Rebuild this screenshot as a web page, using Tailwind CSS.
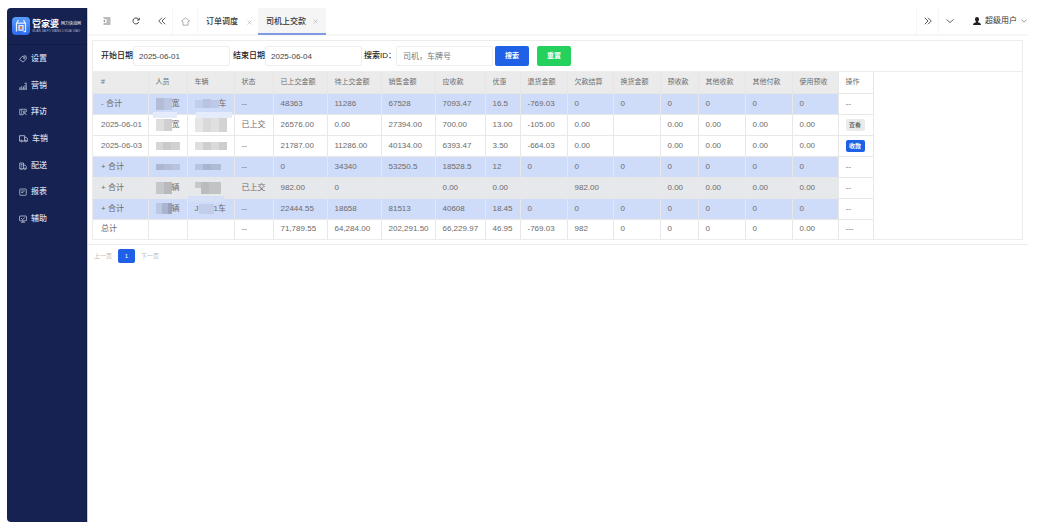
<!DOCTYPE html>
<html lang="zh-CN">
<head>
    <meta charset="UTF-8">
    <meta name="viewport" content="width=device-width, initial-scale=1.0">
    <title>司机上交款</title>
    <script src="https://cdn.jsdelivr.net/npm/@tailwindcss/browser@4"></script>
</head>
<body class="bg-white text-[#6b6b6b] text-[8px] leading-3 font-['Liberation_Sans','Noto_Sans_CJK_SC',sans-serif]">
    <div class="flex min-h-screen pt-2 pb-[6px] pl-[7px] pr-[31px]">
        <!-- 左侧菜单 -->
        <aside class="w-20 shrink-0 bg-[#152252] rounded-l border-r border-[#0f1a45] text-[#d3d8e8]">
            <div class="flex items-center gap-[2px] h-[37px] pl-[5px] border-b border-[#111c48]">
                <svg class="size-[18px] shrink-0" viewBox="0 0 36 36" fill="none">
                    <defs><linearGradient id="logo" x1="0" y1="0" x2="0" y2="1"><stop stop-color="#5b9dfb"/><stop offset="1" stop-color="#2a69ee"/></linearGradient></defs>
                    <rect width="36" height="36" rx="8" fill="url(#logo)"/>
                    <path d="M13 6l-3 5M23 6l3 5M8 12h20M9 12v17M27 12v17h-4M14 17h8v9h-8zM14 21h8" stroke="#e6efff" stroke-width="2.5"/>
                    <circle cx="18" cy="21" r="2.500" fill="#e8762c"/>
                </svg>
                <div>
                    <div class="flex items-center gap-[2px] whitespace-nowrap text-white">
                        <b class="text-[9px] leading-[10px]">管家婆</b>
                        <span class="text-[4px] leading-[10px]">网力快消网</span>
                    </div>
                    <div class="text-[3px] leading-[4px] whitespace-nowrap text-[#aab4d4]">GUAN JIA PO WANG LI KUAI XIAO</div>
                </div>
            </div>
            <nav class="grid auto-rows-fr h-[187px] pt-px font-medium">
                <a href="#" class="flex items-center gap-1 pl-3">
                    <svg class="size-2" viewBox="0 0 16 16" fill="none" stroke="currentColor" stroke-width="1.4"><path d="M6 3l7.500-1.500 1.500 6L8.500 14 1 9z" stroke-linejoin="round"/><circle cx="10.500" cy="6" r="1.500"/></svg>
                    设置
                </a>
                <a href="#" class="flex items-center gap-1 pl-3">
                    <svg class="size-2" viewBox="0 0 16 16" fill="none" stroke="currentColor" stroke-width="1.4"><path d="M2 14v-4M5.500 14V8M9 14V9M12 14V6M14.500 14V2M0 14.500h16M11 3l3.500-1.500"/></svg>
                    营销
                </a>
                <a href="#" class="flex items-center gap-1 pl-3">
                    <svg class="size-2" viewBox="0 0 16 16" fill="none" stroke="currentColor" stroke-width="1.4"><path d="M8 13.500H1.500v-11h13V8M4 5.500h3M4 8h2M4 10.500h2"/><circle cx="10.500" cy="8" r="2"/><path d="M8 14c0-5 6-5 6 0"/></svg>
                    拜访
                </a>
                <a href="#" class="flex items-center gap-1 pl-3">
                    <svg class="size-[9px]" viewBox="0 0 16 16" fill="none" stroke="currentColor" stroke-width="1.4"><path d="M3 12.500H1V3h9v9.500H6M10 6h3l2.500 3v3.500H14"/><circle cx="4.500" cy="12.500" r="1.500"/><circle cx="12" cy="12.500" r="1.500"/></svg>
                    车销
                </a>
                <a href="#" class="flex items-center gap-1 pl-3">
                    <svg class="size-2" viewBox="0 0 16 16" fill="none" stroke="currentColor" stroke-width="1.4"><path d="M3 14H1.500V2H9v12H6M3.500 5H7M3.500 8H7M9 6h3l2.500 3v5H13"/><circle cx="4.500" cy="13.500" r="1.500"/><circle cx="11.500" cy="13.500" r="1.500"/></svg>
                    配送
                </a>
                <a href="#" class="flex items-center gap-1 pl-3">
                    <svg class="size-2" viewBox="0 0 16 16" fill="none" stroke="currentColor" stroke-width="1.4"><rect x="1.500" y="2" width="13" height="12.500" rx="1"/><path d="M4.500 6h7M4.500 9h4"/></svg>
                    报表
                </a>
                <a href="#" class="flex items-center gap-1 pl-3">
                    <svg class="size-2" viewBox="0 0 16 16" fill="none" stroke="currentColor" stroke-width="1.4"><rect x="1" y="2" width="14" height="9.500" rx="1"/><path d="M4 6l3 3 5-4M8 11.500V14M4 14.500h8"/></svg>
                    辅助
                </a>
            </nav>
        </aside>

        <div class="flex-1 min-w-0 border-l border-[#c9cde0]">
            <!-- 顶部标签栏 -->
            <header class="flex h-7 border-b-2 border-[#f6f6f6] text-[#333]">
                <button class="w-[38px] grid place-items-center" aria-label="收起菜单">
                    <svg class="size-2" viewBox="0 0 16 16" fill="none" stroke="#555" stroke-width="1.600"><path d="M1 2h14M7 6h8M7 10h8M1 14h14M4 5.500L1.500 8 4 10.500"/></svg>
                </button>
                <button class="w-[20px] grid place-items-center" aria-label="刷新">
                    <svg class="size-2" viewBox="0 0 16 16" fill="none" stroke="#333" stroke-width="1.800"><path d="M13.500 10A6 6 0 1 1 12.500 4L14 5.500M14.500 1.500v4.500H10"/></svg>
                </button>
                <button class="w-[27px] pl-[5px] grid place-items-center border-r border-[#f6f6f6]" aria-label="向左">
                    <svg class="size-2" viewBox="0 0 16 16" fill="none" stroke="#444" stroke-width="1.800"><path d="M8 1.500L1.500 8 8 14.500M14.500 1.500L8 8l6.500 6.500"/></svg>
                </button>
                <a href="#" class="w-[25px] grid place-items-center border-r border-[#f6f6f6]" aria-label="首页">
                    <svg class="size-[9px]" viewBox="0 0 16 16" fill="none" stroke="#888" stroke-width="1.200"><path d="M3.500 14.500h9V8.500L15 7 8 1.500 1 7l2.500 1.500z" stroke-linejoin="round"/></svg>
                </a>
                <a href="#" class="w-[60px] flex items-center justify-between pl-2 pr-[6px] pt-[2px] font-medium">
                    订单调度
                    <svg class="size-[5px]" viewBox="0 0 10 10" stroke="#bbb" stroke-width="1.500"><path d="M1 1l8 8M9 1L1 9"/></svg>
                </a>
                <a href="#" class="w-[68px] flex items-center justify-between px-2 font-medium bg-[#f5f5f5] border-b-2 border-[#7f9ae0] -mb-[1px] pt-[2px]">
                    司机上交款
                    <svg class="size-[5px]" viewBox="0 0 10 10" stroke="#bbb" stroke-width="1.500"><path d="M1 1l8 8M9 1L1 9"/></svg>
                </a>
                <button class="ml-auto w-[22px] grid place-items-center border-l border-[#f6f6f6]" aria-label="向右">
                    <svg class="size-2" viewBox="0 0 16 16" fill="none" stroke="#444" stroke-width="1.800"><path d="M1.500 1.500L8 8l-6.500 6.500M8 1.500L14.500 8 8 14.500"/></svg>
                </button>
                <button class="w-[22px] grid place-items-center border-l border-[#f6f6f6]" aria-label="更多">
                    <svg class="size-2" viewBox="0 0 16 16" fill="none" stroke="#444" stroke-width="1.600"><path d="M1 5l7 6 7-6"/></svg>
                </button>
                <button class="w-[68px] flex items-center justify-end gap-1 pr-px whitespace-nowrap">
                    <svg class="size-2 shrink-0" viewBox="0 0 16 16" fill="#222"><path d="M8 0c2.500 0 4 1.800 4 4.300C12 6.500 11 8 10 9v1.500c2 .5 6 1 6 5.500H0c0-4.500 4-5 6-5.500V9C5 8 4 6.500 4 4.300 4 1.800 5.500 0 8 0z"/></svg>
                    超级用户
                    <svg class="size-[6px] shrink-0" viewBox="0 0 16 16" fill="none" stroke="#555" stroke-width="1.600"><path d="M1 4l7 7 7-7"/></svg>
                </button>
            </header>

            <main>
                <div class="ml-1 mr-[5px] mt-1 border border-[#ececec]">
                    <!-- 查询条件 -->
                    <form class="flex items-center h-[31px] pl-2 text-[#222] border-b border-[#ececec] whitespace-nowrap">
                        <label for="startDate" class="w-8 font-medium">开始日期</label>
                        <input id="startDate" type="text" value="2025-06-01" class="w-[97px] h-5 px-[5px] border border-[#eee] rounded-xs text-[#444]">
                        <label for="endDate" class="w-8 ml-[3px] font-medium">结束日期</label>
                        <input id="endDate" type="text" value="2025-06-04" class="w-[97px] h-5 px-[5px] border border-[#eee] rounded-xs text-[#444]">
                        <label for="keyword" class="w-8 ml-[2px] font-medium">搜索ID：</label>
                        <input id="keyword" type="text" placeholder="司机，车牌号" class="w-[97px] h-5 px-[6px] border border-[#eee] rounded-xs placeholder:text-[#777]">
                        <button type="submit" class="w-[34px] h-5 ml-[2px] rounded-xs bg-[#1e60e6] text-white text-[7px] font-bold">搜索</button>
                        <button type="reset" class="w-[34px] h-5 ml-2 rounded-xs bg-[#24d15c] text-white text-[7px] font-bold">重置</button>
                    </form>

                    <!-- 上交款列表 -->
                    <table class="table-fixed w-[780px] leading-[10px] whitespace-nowrap text-left [&_tr]:h-[21px] [&_tbody_tr:last-child]:h-5 [&_th]:px-[7px] [&_td]:px-[7px] [&_th]:border-r [&_th]:border-b [&_td]:border-r [&_td]:border-b [&_th]:border-[#e6e6e6] [&_td]:border-[#e8e8e8] [&_tr>*:first-child]:pl-2 [&_tr>*:last-child]:bg-white [&_tbody_tr:last-child>td]:border-b-0">
                        <colgroup>
                            <col class="w-[55px]"><col class="w-[39px]"><col class="w-[47px]"><col class="w-[39px]"><col class="w-[54px]"><col class="w-[54px]"><col class="w-[54px]"><col class="w-[50px]"><col class="w-[35px]"><col class="w-[47px]"><col class="w-[46px]"><col class="w-[47px]"><col class="w-[38px]"><col class="w-[47px]"><col class="w-[47px]"><col class="w-[46px]"><col class="w-[35px]">
                        </colgroup>
                        <thead class="bg-[#ebebeb] text-[7px] [&_th]:font-normal">
                            <tr><th>#</th><th>人员</th><th>车辆</th><th>状态</th><th>已上交金额</th><th>待上交金额</th><th>销售金额</th><th>应收款</th><th>优惠</th><th>退货金额</th><th>欠款结算</th><th>换货金额</th><th>预收款</th><th>其他收款</th><th>其他付款</th><th>使用预收</th><th>操作</th></tr>
                        </thead>
                        <tbody>
                            <tr class="bg-[#cfdcf9]">
                                <td>- 合计</td>
                                <td><div class="flex items-center"><i class="w-2 h-3 bg-[#b3bdd6]"></i><i class="w-2 h-3 bg-[#bcc7e2]"></i>宽</div></td>
                                <td><div class="flex items-center"><i class="w-2 h-2 bg-[#c1cdea]"></i><i class="w-2 h-[9px] bg-[#b8c4e1]"></i><i class="w-2 h-2 bg-[#bdc9e6]"></i>车</div></td>
                                <td>--</td><td>48363</td><td>11286</td><td>67528</td><td>7093.47</td><td>16.5</td><td>-769.03</td><td>0</td><td>0</td><td>0</td><td>0</td><td>0</td><td>0</td><td>--</td>
                            </tr>
                            <tr>
                                <td>2025-06-01</td>
                                <td class="relative"><i class="absolute left-1 -top-[3px] w-6 h-[6px] bg-[#e5ebfb]"></i><div class="flex items-center"><i class="w-2 h-3 bg-[#dedede]"></i><i class="w-2 h-3 bg-[#cfcfcf]"></i>宽</div></td>
                                <td class="relative"><i class="absolute left-2 -top-[3px] w-9 h-[6px] bg-[#e5ebfb]"></i><div class="flex items-center"><i class="w-2 h-[14px] bg-[#e6e6e6]"></i><i class="w-2 h-[14px] bg-[#d9d9d9]"></i><i class="w-2 h-[14px] bg-[#e0e0e0]"></i><i class="w-2 h-[14px] bg-[#d3d3d3]"></i></div></td>
                                <td>已上交</td><td>26576.00</td><td>0.00</td><td>27394.00</td><td>700.00</td><td>13.00</td><td>-105.00</td><td>0.00</td><td></td><td>0.00</td><td>0.00</td><td>0.00</td><td>0.00</td>
                                <td><button class="block w-[19px] h-3 rounded-xs bg-[#ebebeb] text-[6px] leading-3 text-[#444]">查看</button></td>
                            </tr>
                            <tr>
                                <td>2025-06-03</td>
                                <td><div class="flex"><i class="w-2 h-2 bg-[#d6d6d6]"></i><i class="w-2 h-2 bg-[#c9c9c9]"></i><i class="w-[9px] h-2 bg-[#d1d1d1]"></i></div></td>
                                <td><div class="flex"><i class="w-2 h-2 bg-[#dedede]"></i><i class="w-2 h-2 bg-[#cecece]"></i><i class="w-2 h-2 bg-[#dadada]"></i><i class="w-2 h-2 bg-[#cdcdcd]"></i></div></td>
                                <td>--</td><td>21787.00</td><td>11286.00</td><td>40134.00</td><td>6393.47</td><td>3.50</td><td>-664.03</td><td>0.00</td><td></td><td>0.00</td><td>0.00</td><td>0.00</td><td>0.00</td>
                                <td><button class="block w-[19px] h-3 rounded-xs bg-[#1e60e6] text-[6px] leading-3 font-bold text-white">收款</button></td>
                            </tr>
                            <tr class="bg-[#cfdcf9]">
                                <td>+ 合计</td>
                                <td><div class="flex"><i class="w-2 h-[6px] bg-[#acb6cf]"></i><i class="w-2 h-[6px] bg-[#b3bdd8]"></i><i class="w-2 h-[6px] bg-[#b8c3df]"></i></div></td>
                                <td><div class="flex"><i class="w-2 h-[6px] bg-[#b8c3df]"></i><i class="w-2 h-[6px] bg-[#aab4cf]"></i><i class="w-[10px] h-[6px] bg-[#afbad5]"></i></div></td>
                                <td>--</td><td>0</td><td>34340</td><td>53250.5</td><td>18528.5</td><td>12</td><td>0</td><td>0</td><td>0</td><td>0</td><td>0</td><td>0</td><td>0</td><td>--</td>
                            </tr>
                            <tr class="bg-[#e7e8eb]">
                                <td>+ 合计</td>
                                <td><div class="flex items-center"><i class="w-2 h-3 bg-[#c6c7c9]"></i><i class="w-2 h-3 bg-[#b8b9bb]"></i>辆</div></td>
                                <td><div class="flex items-start"><i class="w-[6px] h-[6px] bg-[#c6c7c9]"></i><i class="w-2 h-3 bg-[#babbbd]"></i><i class="w-3 h-3 bg-[#c2c3c5]"></i></div></td>
                                <td>已上交</td><td>982.00</td><td>0</td><td></td><td>0.00</td><td>0.00</td><td></td><td>982.00</td><td></td><td>0.00</td><td>0.00</td><td>0.00</td><td>0.00</td><td>--</td>
                            </tr>
                            <tr class="bg-[#cfdcf9]">
                                <td>+ 合计</td>
                                <td><div class="flex items-center"><i class="w-[6px] h-[11px] bg-[#bcc7e2]"></i><i class="w-[6px] h-[11px] bg-[#aab4cf]"></i><i class="w-1 h-[11px] bg-[#98a2bd]"></i>辆</div></td>
                                <td class="relative"><i class="absolute left-0 -top-[3px] w-9 h-[6px] bg-[#d5dff6]"></i><div class="flex items-center">J<i class="w-[15px] h-[10px] bg-[#c1cdea]"></i>1车</div></td>
                                <td>--</td><td>22444.55</td><td>18658</td><td>81513</td><td>40608</td><td>18.45</td><td>0</td><td>0</td><td>0</td><td>0</td><td>0</td><td>0</td><td>0</td><td>--</td>
                            </tr>
                            <tr>
                                <td>总计</td><td></td><td></td><td>--</td><td>71,789.55</td><td>64,284.00</td><td>202,291.50</td><td>66,229.97</td><td>46.95</td><td>-769.03</td><td>982</td><td>0</td><td>0</td><td>0</td><td>0</td><td>0.00</td><td>---</td>
                            </tr>
                        </tbody>
                    </table>
                </div>

                <!-- 分页 -->
                <nav class="flex items-center mt-1 pt-1 pl-[6px] border-t border-[#ececec] text-[6px] text-[#bbb]">
                    <a href="#" class="w-6">上一页</a>
                    <a href="#" class="w-[17px] h-[14px] leading-[14px] rounded-xs bg-[#1e60e6] text-center text-white">1</a>
                    <a href="#" class="ml-[6px]">下一页</a>
                </nav>
            </main>
        </div>
    </div>
</body>
</html>
